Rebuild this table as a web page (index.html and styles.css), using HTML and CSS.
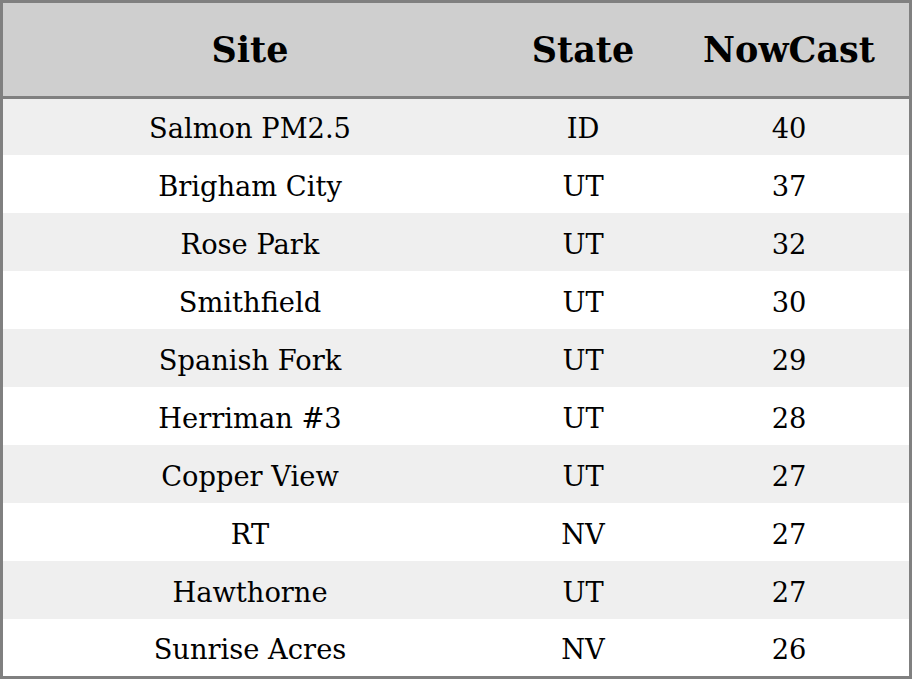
FILE: index.html
```html
<!DOCTYPE html>
<html>
<head>
<meta charset="utf-8">
<link rel="stylesheet" href="styles.css">
</head>
<body>
<div class="table">
  <div class="row head">
    <div class="cell c-site">Site</div>
    <div class="cell c-state">State</div>
    <div class="cell c-now">NowCast</div>
  </div>
  <div class="row odd first"><div class="cell c-site">Salmon PM2.5</div><div class="cell c-state">ID</div><div class="cell c-now">40</div></div>
  <div class="row"><div class="cell c-site">Brigham City</div><div class="cell c-state">UT</div><div class="cell c-now">37</div></div>
  <div class="row odd"><div class="cell c-site">Rose Park</div><div class="cell c-state">UT</div><div class="cell c-now">32</div></div>
  <div class="row"><div class="cell c-site">Smithfield</div><div class="cell c-state">UT</div><div class="cell c-now">30</div></div>
  <div class="row odd"><div class="cell c-site">Spanish Fork</div><div class="cell c-state">UT</div><div class="cell c-now">29</div></div>
  <div class="row"><div class="cell c-site">Herriman #3</div><div class="cell c-state">UT</div><div class="cell c-now">28</div></div>
  <div class="row odd"><div class="cell c-site">Copper View</div><div class="cell c-state">UT</div><div class="cell c-now">27</div></div>
  <div class="row"><div class="cell c-site">RT</div><div class="cell c-state">NV</div><div class="cell c-now">27</div></div>
  <div class="row odd"><div class="cell c-site">Hawthorne</div><div class="cell c-state">UT</div><div class="cell c-now">27</div></div>
  <div class="row last"><div class="cell c-site">Sunrise Acres</div><div class="cell c-state">NV</div><div class="cell c-now">26</div></div>
</div>
</body>
</html>
```
FILE: styles.css
```css
html, body {
  margin: 0;
  padding: 0;
  background: #ffffff;
}
.table {
  box-sizing: border-box;
  width: 912px;
  height: 679px;
  border: 3px solid #808080;
  display: grid;
  grid-template-rows: 96px 56px repeat(8, 58px) 57px;
  font-family: "DejaVu Serif", serif;
  color: #000;
}
.row {
  box-sizing: border-box;
  display: grid;
  grid-template-columns: 494px 172px 1fr;
  align-items: center;
  font-size: 27.3px;
  background: #ffffff;
  padding-top: 4px;
}
.row.first {
  padding-top: 2px;
}
.row.last {
  padding-top: 3px;
}
.row.odd {
  background: #efefef;
}
.row.head {
  background: #cfcfcf;
  border-bottom: 3px solid #808080;
  font-weight: bold;
  font-size: 35px;
  padding-top: 0;
}
.cell {
  text-align: center;
}
```
